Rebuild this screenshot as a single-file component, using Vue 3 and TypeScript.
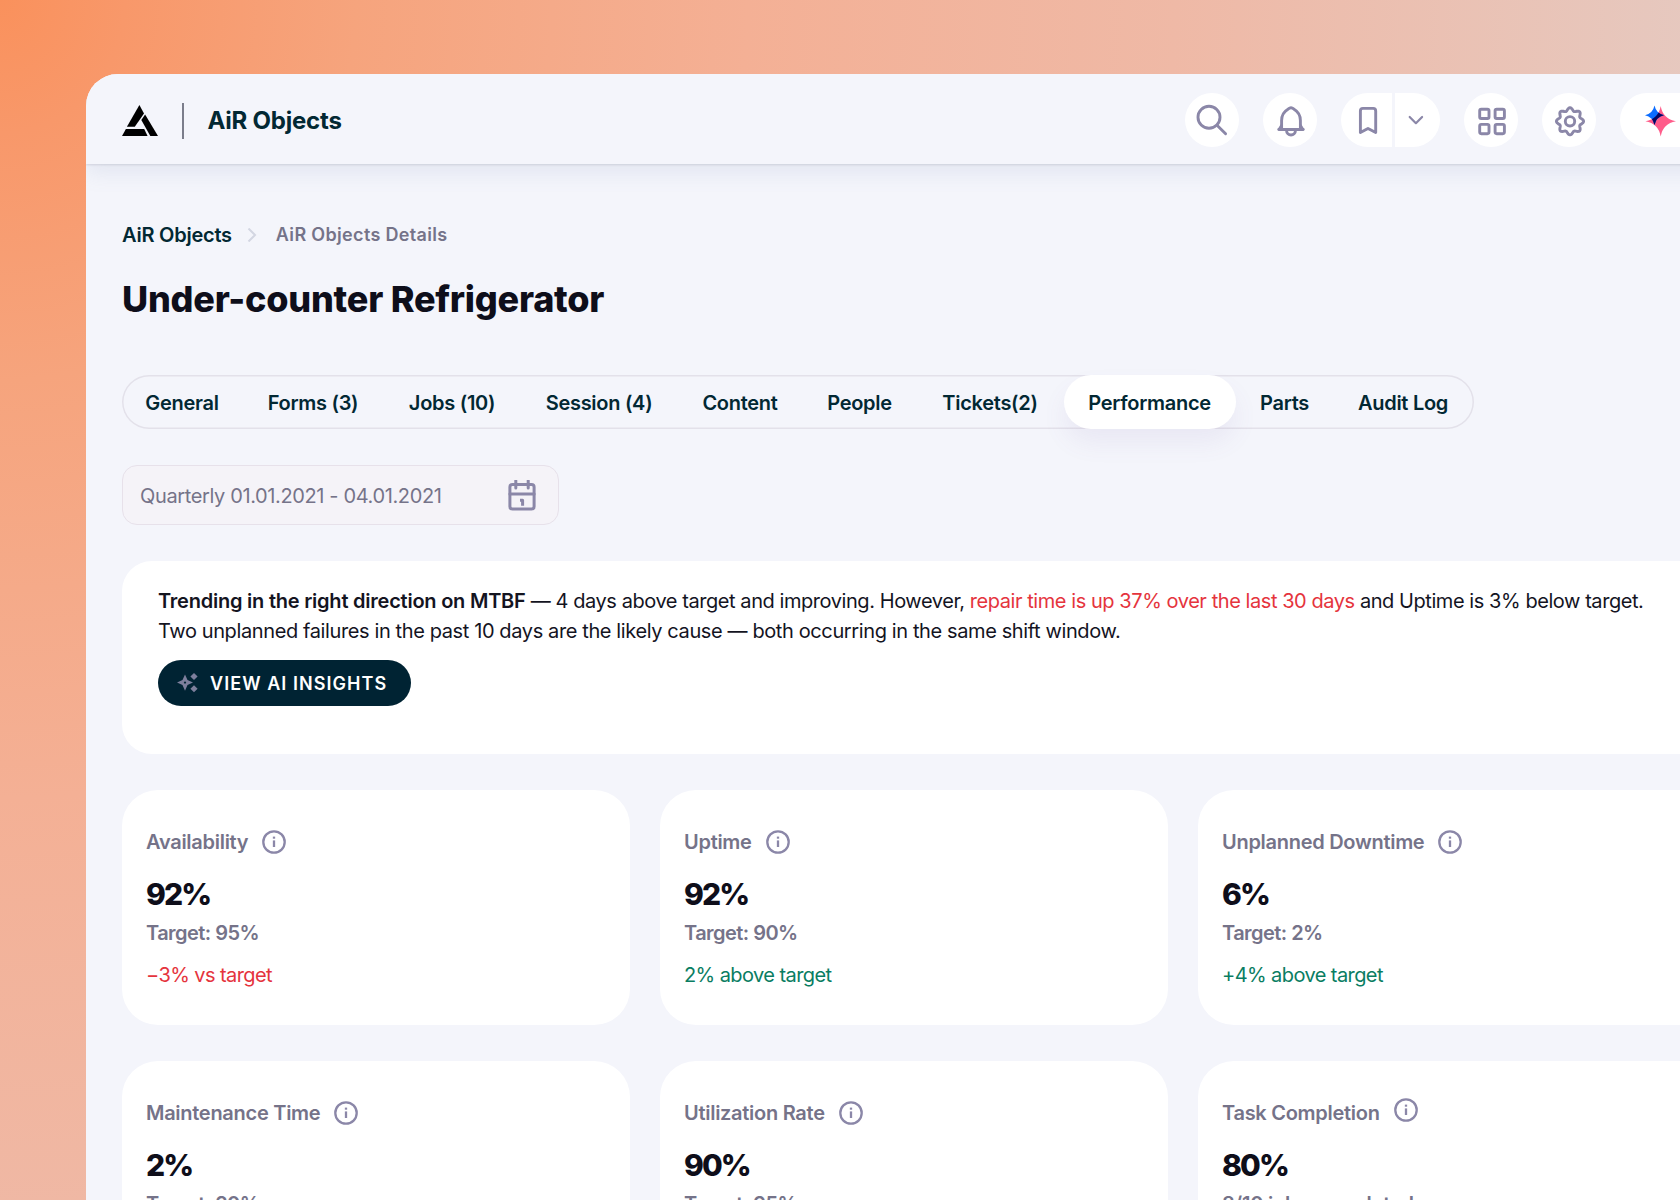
<script setup lang="ts">
interface Tab { label: string; width: number; active?: boolean }
interface Metric {
  label: string
  value: string
  target: string
  delta?: string
  tone?: 'bad' | 'good'
  raised?: boolean
}

const tabs: Tab[] = [
  { label: 'General', width: 121 },
  { label: 'Forms (3)', width: 141 },
  { label: 'Jobs (10)', width: 137 },
  { label: 'Session (4)', width: 157 },
  { label: 'Content', width: 125 },
  { label: 'People', width: 114 },
  { label: 'Tickets(2)', width: 147 },
  { label: 'Performance', width: 172, active: true },
  { label: 'Parts', width: 98 },
  { label: 'Audit Log', width: 139 },
]

const metrics: Metric[] = [
  { label: 'Availability', value: '92%', target: 'Target: 95%', delta: '−3% vs target', tone: 'bad' },
  { label: 'Uptime', value: '92%', target: 'Target: 90%', delta: '2% above target', tone: 'good' },
  { label: 'Unplanned Downtime', value: '6%', target: 'Target: 2%', delta: '+4% above target', tone: 'good' },
  { label: 'Maintenance Time', value: '2%', target: 'Target: 20%' },
  { label: 'Utilization Rate', value: '90%', target: 'Target: 95%' },
  { label: 'Task Completion', value: '80%', target: '8/10 jobs completed', raised: true },
]

// Eight-lobed cog outline around (28, 28.3)
const cog = Array.from({ length: 96 }, (_, i) => {
  const a = (i / 96) * Math.PI * 2
  const r = 12.1 + 1.5 * Math.cos(8 * a)
  return `${i ? 'L' : 'M'}${(28 + r * Math.sin(a)).toFixed(2)} ${(28.3 - r * Math.cos(a)).toFixed(2)}`
}).join(' ') + ' Z'
</script>

<template>
  <div class="stage">
    <div class="window">
      <header class="topbar">
        <svg class="logo" viewBox="0 0 36 31" width="36" height="31">
          <path d="M17.4 0 L22 8.4 L12.8 21.7 H4.9 Z" />
          <path d="M23.1 9.6 L36 31 H28.3 L19.3 14.9 Z" />
          <path d="M3.9 23.9 H22.2 L25.6 31 H0 Z" />
        </svg>
        <span class="divider"></span>
        <span class="brand">AiR Objects</span>
        <nav class="actions">
          <button class="round">
            <svg viewBox="0 0 54 54" width="54" height="54">
              <circle cx="24" cy="24.3" r="11" />
              <path d="M32 32.3 L40.6 40.8" />
            </svg>
          </button>
          <button class="round">
            <svg viewBox="0 0 54 54" width="54" height="54">
              <path d="M15.8 36.5 H40.2" />
              <path d="M18.6 36 V27.5 C18.6 21 22 17.8 25.3 15.9 Q28 13.6 30.7 15.9 C34 17.8 37.4 21 37.4 27.5 V36" />
              <path d="M16.3 36.2 L18.6 32.6 M39.7 36.2 L37.4 32.6" />
              <path d="M23.5 37 C23.5 43.6 32.5 43.6 32.5 37" />
            </svg>
          </button>
          <div class="split">
            <button class="split-main">
              <svg viewBox="0 0 51 54" width="51" height="54">
                <path d="M19.4 39.6 V17.9 Q19.4 15.4 21.9 15.4 H32.2 Q34.7 15.4 34.7 17.9 V39.6 L27 35.4 Z" />
              </svg>
            </button>
            <button class="split-more">
              <svg viewBox="0 0 45 54" width="45" height="54">
                <path class="thin" d="M14.7 24 L20.9 30.2 L27.1 24" />
              </svg>
            </button>
          </div>
          <button class="round">
            <svg viewBox="0 0 54 54" width="54" height="54">
              <rect x="15.7" y="16.2" width="9.3" height="9.3" rx="1.6" />
              <rect x="31.1" y="16.2" width="9.3" height="9.3" rx="1.6" />
              <rect x="15.7" y="31.4" width="9.3" height="9.3" rx="1.6" />
              <rect x="31.1" y="31.4" width="9.3" height="9.3" rx="1.6" />
            </svg>
          </button>
          <button class="round">
            <svg viewBox="0 0 54 54" width="54" height="54">
              <circle cx="28" cy="28.3" r="4.7" />
              <path :d="cog" />
            </svg>
          </button>
          <button class="assistant">
            <svg viewBox="0 0 34 34" width="34" height="34">
              <defs>
                <clipPath id="spark">
                  <path d="M16.7 2 Q18.9 15 32 17.2 Q18.9 19.4 16.7 32.5 Q14.5 19.4 1.4 17.2 Q14.5 15 16.7 2 Z" />
                </clipPath>
              </defs>
              <path class="pink" d="M16.7 2 Q18.9 15 32 17.2 Q18.9 19.4 16.7 32.5 Q14.5 19.4 1.4 17.2 Q14.5 15 16.7 2 Z" />
              <path class="blue" d="M10.5 1.5 Q12.2 9.5 20 11.2 Q12.2 12.9 10.5 21 Q8.8 12.9 1 11.2 Q8.8 9.5 10.5 1.5 Z" />
              <path class="navy" clip-path="url(#spark)" d="M10.5 1.5 Q12.2 9.5 20 11.2 Q12.2 12.9 10.5 21 Q8.8 12.9 1 11.2 Q8.8 9.5 10.5 1.5 Z" />
            </svg>
          </button>
        </nav>
      </header>

      <main class="content">
        <div class="crumbs">
          <a class="crumb-root">AiR Objects</a>
          <svg class="crumb-sep" viewBox="0 0 10 14" width="10" height="14"><path d="M1.5 0.5 L8 7 L1.5 13.5" /></svg>
          <span class="crumb-leaf">AiR Objects Details</span>
        </div>
        <h1>Under-counter Refrigerator</h1>

        <div class="tabs">
          <button
            v-for="t in tabs"
            :key="t.label"
            class="tab"
            :class="{ active: t.active }"
            :style="{ width: t.width + 'px' }"
          >{{ t.label }}</button>
        </div>

        <div class="date">
          <span class="date-text">Quarterly 01.01.2021 - 04.01.2021</span>
          <svg viewBox="0 0 28 31" width="28" height="31">
            <rect x="1.9" y="4.4" width="24.2" height="24.6" rx="2.6" />
            <path d="M1.9 14 H26.1 M7.8 0.6 V8 M20.2 0.6 V8" />
            <path class="one" d="M12 20.2 H14.6 V25.8" />
          </svg>
        </div>

        <section class="insight">
          <p class="lead"><strong>Trending in the right direction on MTBF</strong> — 4 days above target and improving. However, <em>repair time is up 37% over the last 30 days</em> and Uptime is 3% below target.</p>
          <p>Two unplanned failures in the past 10 days are the likely cause — both occurring in the same shift window.</p>
          <button class="cta">
            <svg viewBox="0 0 22 20" width="22" height="20">
              <path fill-rule="evenodd" d="M8 1.6 L10.5 7.1 L16 9.6 L10.5 12.1 L8 17.8 L5.5 12.1 L0 9.6 L5.5 7.1 Z M8 8.3 L6.7 9.6 L8 10.9 L9.3 9.6 Z" />
              <path d="M17 0 L20.6 3.5 L17 7 L13.4 3.5 Z M17 12.2 L20.6 15.7 L17 19.2 L13.4 15.7 Z" />
            </svg>
            <span>VIEW AI INSIGHTS</span>
          </button>
        </section>

        <section class="grid">
          <article v-for="m in metrics" :key="m.label" class="card">
            <div class="card-head" :class="{ raised: m.raised }">
              <span>{{ m.label }}</span>
              <svg viewBox="0 0 24 24" width="24" height="24">
                <circle cx="12" cy="12" r="10.7" />
                <path d="M12 10.4 V17" />
                <path d="M12 6.6 V8.7" />
              </svg>
            </div>
            <div class="value">{{ m.value }}</div>
            <div class="target" :class="{ prose: !m.target.includes('%') }">{{ m.target }}</div>
            <div v-if="m.delta" class="delta" :class="m.tone">{{ m.delta }}</div>
          </article>
        </section>
      </main>
    </div>
  </div>
</template>

<style>
html,
body {
  margin: 0;
  overflow: hidden;
}
</style>

<style scoped>
.stage {
  box-sizing: border-box;
  width: 1680px;
  height: 1200px;
  overflow: hidden;
  padding: 74px 0 0 86px;
  font-family: Inter, 'Liberation Sans', sans-serif;
  background: radial-gradient(ellipse 1780px 1900px at 0 0, #fa915c 0%, #f8986a 7%, #f6a47d 20%, #f4b095 42%, #efb9a6 66%, #e6c9c0 96%);
}
button {
  border: 0;
  margin: 0;
  padding: 0;
  font-family: inherit;
  background: none;
}
svg {
  display: block;
  flex: none;
}
.window {
  box-sizing: border-box;
  width: 1760px;
  height: 1200px;
  border-top-left-radius: 32px;
  background: #f4f5fb;
  overflow: hidden;
}
.topbar {
  position: relative;
  box-sizing: border-box;
  display: flex;
  align-items: center;
  height: 90px;
  padding-left: 36px;
  background: #f4f5fb;
  box-shadow: 0 1px 2px rgba(60, 60, 80, 0.14), 0 8px 20px rgba(120, 138, 180, 0.15);
}
.logo {
  fill: #000;
  margin-top: 3px;
}
.divider {
  width: 1.5px;
  height: 36px;
  margin: 3px 24px 0 24px;
  background: #7b7d8b;
}
.brand {
  margin-top: 3px;
  font-size: 24px;
  font-weight: 700;
  line-height: 30px;
  letter-spacing: -0.22px;
  color: #022833;
}
.actions {
  display: flex;
  gap: 24px;
  position: absolute;
  left: 1099px;
  top: 19px;
}
.actions svg {
  fill: none;
  stroke: #8b87a8;
  stroke-width: 2.9;
  stroke-linecap: round;
  stroke-linejoin: round;
}
.round {
  width: 54px;
  height: 54px;
  border-radius: 50%;
  background: #fff;
}
.split {
  display: flex;
  gap: 3px;
  width: 99px;
  height: 54px;
}
.split-main {
  width: 51px;
  border-radius: 27px 0 0 27px;
  background: #fff;
}
.split-more {
  width: 45px;
  border-radius: 0 27px 27px 0;
  background: #fff;
}
.actions svg .thin {
  stroke-width: 2.2;
}
.assistant {
  display: flex;
  align-items: center;
  width: 170px;
  height: 54px;
  padding: 2px 0 0 24px;
  border-radius: 27px;
  background: #fff;
}
.actions .assistant svg {
  stroke: none;
}
.pink { fill: #ff5c8a; }
.blue { fill: #0a6cff; }
.navy { fill: #06065e; }

.content {
  padding: 56px 0 0 36px;
}
.crumbs {
  display: flex;
  align-items: center;
  height: 30px;
}
.crumb-root {
  font-size: 20px;
  font-weight: 600;
  line-height: 30px;
  letter-spacing: -0.23px;
  color: #022833;
}
.crumb-sep {
  margin: 0 19px 0 15px;
  fill: none;
  stroke: #d3d6e2;
  stroke-width: 2;
}
.crumb-leaf {
  font-size: 18px;
  font-weight: 600;
  line-height: 30px;
  letter-spacing: 0.33px;
  color: #757389;
}
h1 {
  margin: 27px 0 0;
  font-size: 36px;
  font-weight: 800;
  line-height: 44px;
  letter-spacing: -0.23px;
  color: #0e0e1a;
}
.tabs {
  box-sizing: border-box;
  display: flex;
  width: 1352px;
  height: 54px;
  margin-top: 54.4px;
  border-radius: 27px;
  box-shadow: inset 0 0 0 1.5px #e3e1ea;
}
.tab {
  box-sizing: border-box;
  height: 54px;
  border-radius: 27px;
  padding: 1px 1px 0 0;
  font-size: 20px;
  font-weight: 600;
  line-height: 54px;
  letter-spacing: -0.28px;
  text-align: center;
  white-space: nowrap;
  color: #022833;
}
.tab.active {
  background: #fff;
  box-shadow: 0 14px 24px rgba(120, 90, 160, 0.08);
}
.date {
  box-sizing: border-box;
  display: flex;
  align-items: center;
  justify-content: space-between;
  width: 437px;
  height: 60px;
  margin-top: 36px;
  padding: 1px 22px 0 17px;
  border: 1.5px solid #e7e1ea;
  border-radius: 15px;
  background: #f5f3f8;
}
.date-text {
  font-size: 20px;
  line-height: 30px;
  letter-spacing: -0.37px;
  color: #757389;
}
.date svg {
  fill: none;
  stroke: #8b87a8;
  stroke-width: 3;
  stroke-linecap: round;
}
.date svg .one {
  stroke-linecap: butt;
  stroke-linejoin: round;
}
.insight {
  box-sizing: border-box;
  height: 193px;
  margin-top: 36px;
  padding: 24.6px 0 0 36px;
  border-radius: 30px;
  background: #fff;
}
.insight p {
  margin: 0;
  font-size: 20px;
  line-height: 30px;
  letter-spacing: -0.385px;
  white-space: nowrap;
  color: #14141f;
}
.insight .lead {
  letter-spacing: -0.435px;
}
.insight strong {
  font-weight: 600;
  letter-spacing: -0.23px;
}
.insight em {
  font-style: normal;
  color: #e5343d;
}
.cta {
  display: flex;
  align-items: center;
  gap: 11px;
  width: 253px;
  height: 46px;
  margin-top: 14.4px;
  padding-left: 19px;
  border-radius: 23px;
  background: #002333;
  color: #fff;
  font-size: 18px;
  font-weight: 600;
  letter-spacing: 1.06px;
  white-space: nowrap;
}
.cta svg {
  fill: #7d7f9c;
}
.grid {
  display: grid;
  grid-template-columns: 508px 508px 560px;
  grid-auto-rows: 235px;
  gap: 36px 30px;
  margin-top: 36px;
}
.card {
  box-sizing: border-box;
  padding: 36.6px 24px 0;
  border-radius: 36px;
  background: #fff;
}
.card-head {
  display: flex;
  align-items: center;
  gap: 14px;
  height: 30px;
  font-size: 20px;
  font-weight: 600;
  letter-spacing: -0.28px;
  color: #757389;
}
.card-head svg {
  fill: none;
  stroke: #8b87a8;
  stroke-width: 2.3;
}
.card-head.raised svg {
  margin-bottom: 6px;
}
.value {
  margin-top: 18px;
  font-size: 30px;
  font-weight: 800;
  line-height: 38px;
  letter-spacing: -1.9px;
  color: #0e0e1a;
}
.target {
  margin-top: 5px;
  font-size: 20px;
  font-weight: 600;
  line-height: 30px;
  letter-spacing: -0.55px;
  white-space: nowrap;
  color: #757389;
}
.target.prose {
  letter-spacing: -0.2px;
}
.delta {
  margin-top: 12px;
  font-size: 20px;
  line-height: 30px;
  letter-spacing: -0.58px;
}
.bad { color: #e5343d; }
.good { color: #0a7d62; }
</style>
